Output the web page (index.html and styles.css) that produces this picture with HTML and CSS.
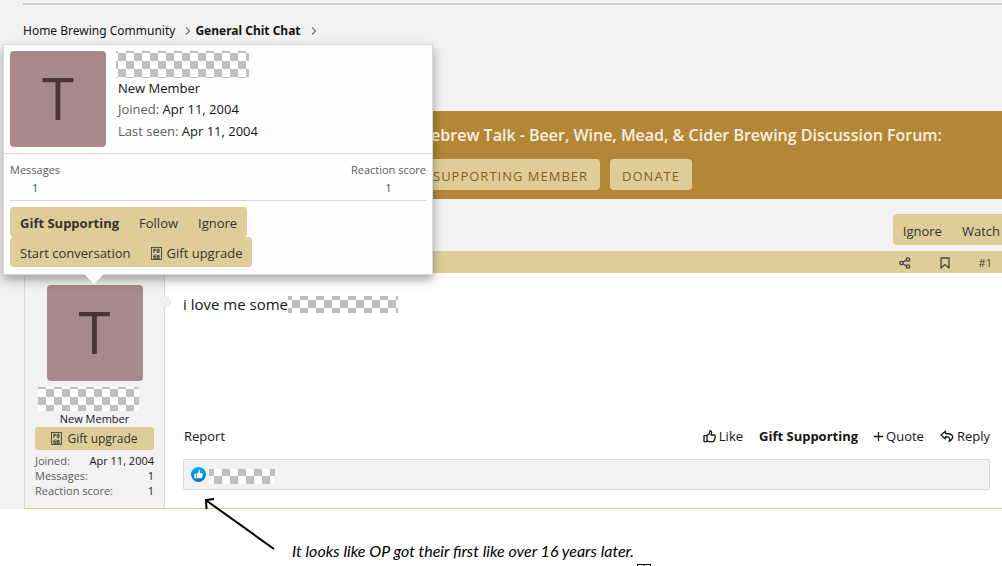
FILE: index.html
```html
<!DOCTYPE html>
<html lang="en">
<head>
    <meta charset="UTF-8">
    <title>General Chit Chat</title>
    <link rel="stylesheet" href="styles.css">
</head>
<body>
    <svg class="sprite" aria-hidden="true">
        <symbol id="icon-missing" viewBox="0 0 11 13">
            <rect x="0.5" y="0.5" width="10" height="12" fill="none" stroke="currentColor" stroke-width="0.8"/>
            <text x="1.7" y="6" class="glyph-code">F0</text>
            <text x="1.7" y="11.5" class="glyph-code">6B</text>
        </symbol>
    </svg>

    <div class="page">
        <nav class="breadcrumb">
            <a href="#">Home Brewing Community</a>
            <svg class="chevron" viewBox="0 0 6 8"><path d="M1 0.5 4.5 4 1 7.5"/></svg>
            <a href="#" class="current">General Chit Chat</a>
            <svg class="chevron" viewBox="0 0 6 8"><path d="M1 0.5 4.5 4 1 7.5"/></svg>
        </nav>

        <div class="banner">
            <div class="banner-title">Homebrew Talk - Beer, Wine, Mead, &amp; Cider Brewing Discussion Forum:</div>
            <div class="banner-buttons">
                <a href="#" class="banner-button">SUPPORTING MEMBER</a>
                <a href="#" class="banner-button">DONATE</a>
            </div>
        </div>

        <div class="thread-actions">
            <div class="button-group thread-group">
                <button type="button">Ignore</button>
                <button type="button">Watch</button>
            </div>
        </div>

        <article class="post">
            <header class="post-header">
                <a href="#" aria-label="Share">
                    <svg width="12" height="12" viewBox="0 0 12 12"><path d="M3.8 5.2 7.4 3M3.8 6.8 7.4 9"/><circle cx="2.5" cy="6" r="1.7"/><circle cx="9" cy="2.5" r="1.7"/><circle cx="9" cy="9.5" r="1.7"/></svg>
                </a>
                <a href="#" aria-label="Bookmark">
                    <svg width="10" height="12" viewBox="0 0 10 12"><path d="M1 1h8v10L5 7.6 1 11z"/></svg>
                </a>
                <a href="#">#1</a>
            </header>
            <div class="post-main">
                <aside class="post-user">
                    <div class="avatar">T</div>
                    <div class="redacted redacted-user"></div>
                    <div class="user-title">New Member</div>
                    <button type="button" class="upgrade"><svg class="missing"><use href="#icon-missing"/></svg>Gift upgrade</button>
                    <dl class="user-stats">
                        <div><dt>Joined:</dt><dd>Apr 11, 2004</dd></div>
                        <div><dt>Messages:</dt><dd>1</dd></div>
                        <div><dt>Reaction score:</dt><dd>1</dd></div>
                    </dl>
                    <svg class="notch" viewBox="0 0 8 14"><path d="M0 0 7 7 0 14"/></svg>
                </aside>
                <div class="post-content">
                    <p class="message">i love me some<span class="redacted redacted-word"></span></p>
                    <div class="post-actions">
                        <a href="#" class="report">Report</a>
                        <a href="#">
                            <svg width="13" height="13" viewBox="0 0 13 13"><path d="M4 5.6 6.4 3.4 6.8 1c1.6-.3 2.1 1 1.7 2.2L8 5h3c1.1 0 1.4 1 .9 1.7.4.6.3 1.2-.2 1.6.2.6 0 1.1-.5 1.5.1.9-.4 1.9-1.6 1.9H7.2c-1.2 0-1.9-.7-3.2-.8"/><path d="M1 5.6h3v6H1z"/></svg>
                            Like</a>
                        <a href="#" class="gift">Gift Supporting</a>
                        <a href="#">
                            <svg width="9" height="9" viewBox="0 0 9 9"><path d="M4.5 0v9M0 4.5h9"/></svg>
                            Quote</a>
                        <a href="#">
                            <svg width="14" height="13" viewBox="0 0 14 13"><path d="M5.5 1.2 1 5.1l4.5 3.8V6.7c3.1-.1 4.7.7 3.8 4.7 2.6-1.6 3.8-3.3 3.3-5.1C12 4.2 9.500 3.500 5.500 3.500z"/></svg>
                            Reply</a>
                    </div>
                    <div class="reactions">
                        <svg class="like-badge" viewBox="0 0 16 16">
                            <defs><linearGradient id="blue" x2="0" y2="1"><stop stop-color="#00b2f5"/><stop offset="1" stop-color="#0869dc"/></linearGradient></defs>
                            <circle cx="8" cy="8" r="8" fill="url(#blue)"/>
                            <path fill="#fff" d="M3.500 7.200h2.200v5H3.500zM6.300 7.200 8 5.300l.3-2.100c1.300-.2 1.700.8 1.400 1.900l-.4 1.500h2.300c.9 0 1.200.8.8 1.400.3.400.2.900-.2 1.300.2.500 0 1-.4 1.200.1.900-.4 1.500-1.300 1.500H8.300c-.9 0-1.200-.3-2-.4z"/>
                        </svg>
                        <span class="redacted redacted-names"></span>
                    </div>
                </div>
            </div>
        </article>

        <section class="member-card">
            <div class="card-header">
                <div class="avatar">T</div>
                <div class="card-info">
                    <div class="redacted redacted-name"></div>
                    <div>New Member</div>
                    <div><span class="label">Joined:</span> Apr 11, 2004</div>
                    <div><span class="label">Last seen:</span> Apr 11, 2004</div>
                </div>
            </div>
            <dl class="card-stats">
                <div><dt>Messages</dt><dd><a href="#">1</a></dd></div>
                <div><dt>Reaction score</dt><dd><a href="#">1</a></dd></div>
            </dl>
            <div class="card-actions">
                <div class="button-group">
                    <button type="button" class="gift">Gift Supporting</button>
                    <button type="button">Follow</button>
                    <button type="button">Ignore</button>
                </div>
                <div class="button-group">
                    <button type="button">Start conversation</button>
                    <button type="button"><svg class="missing"><use href="#icon-missing"/></svg>Gift upgrade</button>
                </div>
            </div>
        </section>
    </div>

    <div class="note">
        <svg class="arrow" viewBox="0 0 74 56"><path d="M71 52 4 4M3.500 12 3 3l8-1"/></svg>
        <p>It looks like OP got their first like over 16 years later.</p>
        <svg class="handle" viewBox="0 0 14 2"><path d="M0 .5h14M.5 0v2M13.500 0v2M7 0v2"/></svg>
    </div>
</body>
</html>
```
FILE: styles.css
```css
* {
    box-sizing: border-box;
}

body {
    margin: 0;
    background: #fff;
    color: #141414;
    font-family: "Open Sans", "Noto Sans", sans-serif;
    font-size: 13px;
    line-height: 20px;
    overflow: hidden;
}

a {
    color: inherit;
    text-decoration: none;
}

button {
    border: 0;
    background: none;
    color: #333;
    font: inherit;
    cursor: pointer;
}

p, dl, dd {
    margin: 0;
}

svg {
    flex: none;
}

path, circle {
    stroke-linejoin: round;
}

.sprite {
    display: none;
}

.page {
    position: relative;
    padding: 3px 0 0 24px;
    background: #f2f2f2;
}

.breadcrumb {
    display: flex;
    align-items: center;
    height: 108px;
    padding-bottom: 54px;
    border-top: 2px solid #d0d0d0;
    margin-left: -1px;
    font-family: "Noto Sans", "Open Sans", sans-serif;
    font-size: 12px;
}

.breadcrumb .current,
.gift {
    font-weight: bold;
}

.chevron {
    width: 6px;
    height: 8px;
    margin: 0 4px 0 10px;
    fill: none;
    stroke: #777;
    stroke-width: 1.3;
}

/* fundraising banner */
.banner {
    height: 88px;
    padding: 14px 60px 0 0;
    background: #b38737;
}

.banner-title {
    color: #f8f1e0;
    font-size: 16px;
    font-weight: 600;
    text-align: right;
    white-space: nowrap;
}

.banner-buttons {
    display: flex;
    gap: 10px;
    margin: 14px 0 0 397px;
}

.banner-button {
    padding: 7px 12px 4px;
    border-radius: 4px;
    background: #dfcd99;
    color: #885f1b;
    letter-spacing: 1px;
    white-space: nowrap;
}

.thread-actions {
    display: flex;
    justify-content: flex-end;
    padding: 15px 0 6px;
}

.button-group {
    display: flex;
    width: max-content;
    background: #dfcd99;
    border-radius: 4px;
}

.button-group button {
    display: flex;
    align-items: center;
    padding: 6px 10px 4px;
}

.thread-group {
    height: 31px;
    border-radius: 4px 0 0 4px;
}

.thread-group button:last-child {
    padding-right: 2px;
}

/* post */
.post {
    border-bottom: 1px solid #dfcd99;
}

.post-header {
    display: flex;
    align-items: center;
    justify-content: flex-end;
    gap: 29px;
    height: 22px;
    padding: 2px 10px 0 0;
    background: #dfcd99;
    color: #444;
    font-size: 11px;
}

.post-header a {
    display: flex;
}

.post-header svg,
.post-actions svg {
    fill: none;
    stroke: currentColor;
    stroke-width: 1.3;
}

.post-main {
    display: flex;
    background: #fff;
}

.post-user {
    position: relative;
    display: flex;
    flex-direction: column;
    flex: none;
    width: 141px;
    padding: 12px 10px 10px;
    border: 1px solid #d8d8d8;
    border-width: 0 1px;
    background: #f2f2f2;
}

.avatar {
    flex: none;
    align-self: center;
    width: 96px;
    height: 96px;
    border-radius: 4px;
    background: #a88a8a;
    color: #4a3535;
    font-size: 58px;
    line-height: 94px;
    text-align: center;
}

.user-title {
    line-height: 16px;
    font-size: 11px;
    text-align: center;
}

.upgrade {
    display: flex;
    align-items: center;
    justify-content: center;
    height: 23px;
    padding: 0;
    border-radius: 3px;
    background: #dfcd99;
    font-size: 12px;
}

.missing {
    width: 11px;
    height: 13px;
    margin-right: 5px;
}

.glyph-code {
    font: bold 6px "DejaVu Sans Mono", monospace;
    fill: currentColor;
}

.user-stats {
    margin-top: 3px;
    font-size: 11px;
    line-height: 15px;
}

.user-stats div {
    display: flex;
    justify-content: space-between;
}

.user-stats dt,
.card-stats dt,
.label {
    color: #5c5c5c;
}

.notch {
    position: absolute;
    top: 22px;
    right: -8px;
    width: 8px;
    height: 14px;
    fill: #f2f2f2;
    stroke: #d8d8d8;
}

.post-content {
    display: flex;
    flex-direction: column;
    flex: 1;
    padding: 20px 12px 18px 18px;
}

.message {
    display: flex;
    align-items: center;
    font-size: 15px;
    line-height: 22px;
}

.post-actions {
    display: flex;
    gap: 16px;
    margin: auto 0 13px 1px;
}

.post-actions a {
    display: flex;
    align-items: center;
    gap: 3px;
}

.post-actions .report {
    margin-right: auto;
}

.reactions {
    display: flex;
    align-items: center;
    gap: 3px;
    height: 31px;
    padding: 0 7px;
    border: 1px solid #d8d8d8;
    border-radius: 2px;
    background: #f2f2f2;
}

.like-badge {
    width: 15px;
    height: 15px;
}

/* checkered blocks that cover names */
.redacted {
    background: repeating-conic-gradient(#fff 0 25%, #bfbfbf 0 50%) 0 0 / 16px 16px;
}

.redacted-user {
    width: 101px;
    height: 24px;
    margin: 6px 0 0 3px;
    background-position: 8px 2px;
}

.redacted-name {
    width: 133px;
    height: 27px;
    margin-left: -2px;
    background-position: 2px 2px;
}

.redacted-word {
    width: 110px;
    height: 17px;
    background-position: 4px 4px;
}

.redacted-names {
    width: 66px;
    height: 15px;
    margin-top: 4px;
    background-position: 5px 7px;
}

/* member tooltip */
.member-card {
    position: absolute;
    top: 44px;
    left: 3px;
    width: 430px;
    border: 1px solid #d8d8d8;
    background: #fefefe;
    box-shadow: 0 5px 10px rgba(0, 0, 0, 0.35);
}

.member-card::after {
    content: "";
    position: absolute;
    top: 100%;
    left: 80px;
    border: 10px solid transparent;
    border-top-color: #fefefe;
    border-bottom-width: 0;
}

.card-header {
    display: flex;
    gap: 12px;
    padding: 6px;
    border-bottom: 1px solid #d8d8d8;
}

.card-info {
    line-height: 22px;
}

.card-info div:nth-child(2) {
    line-height: 20px;
}

.card-stats {
    display: flex;
    justify-content: space-between;
    margin: 0 6px;
    padding: 7px 0 3px;
    border-bottom: 1px solid #d8d8d8;
    font-size: 11px;
    line-height: 18px;
    text-align: center;
}

.card-stats a {
    color: #1f4f8f;
}

.card-actions {
    padding: 6px 6px 7px;
}

.card-actions .button-group {
    height: 30px;
}

/* caption under the post */
.note {
    position: relative;
    height: 57px;
    padding: 32px 0 0 292px;
    color: #000;
    font-family: Lato, "Open Sans", sans-serif;
    font-size: 16px;
    font-style: italic;
}

.arrow {
    position: absolute;
    top: -12px;
    left: 203px;
    width: 74px;
    height: 56px;
    fill: none;
    stroke: #000;
    stroke-width: 2;
}

.handle {
    position: absolute;
    bottom: 0;
    left: 637px;
    width: 14px;
    height: 2px;
    stroke: #000;
}
```
